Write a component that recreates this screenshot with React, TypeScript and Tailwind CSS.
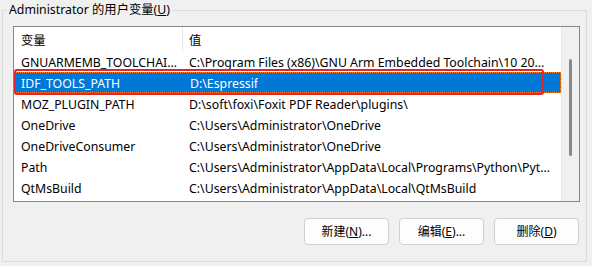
import React from "react";

const rows = [
  { name: "GNUARMEMB_TOOLCHAI...", value: "C:\\Program Files (x86)\\GNU Arm Embedded Toolchain\\10 20..." },
  { name: "IDF_TOOLS_PATH", value: "D:\\Espressif", selected: true },
  { name: "MOZ_PLUGIN_PATH", value: "D:\\soft\\foxi\\Foxit PDF Reader\\plugins\\" },
  { name: "OneDrive", value: "C:\\Users\\Administrator\\OneDrive" },
  { name: "OneDriveConsumer", value: "C:\\Users\\Administrator\\OneDrive" },
  { name: "Path", value: "C:\\Users\\Administrator\\AppData\\Local\\Programs\\Python\\Pyt..." },
  { name: "QtMsBuild", value: "C:\\Users\\Administrator\\AppData\\Local\\QtMsBuild" },
];

function Btn({ label, hot, tail }: { label: string; hot: string; tail: string }) {
  return (
    <button className="w-[85px] h-[27px] rounded-[4px] border border-[#d0d0d0] bg-[#fdfdfd] text-[12px] text-black flex items-center justify-center pt-[1px]">
      {label}(<span className="underline">{hot}</span>){tail}
    </button>
  );
}

export default function App() {
  return (
    <div
      className="w-[592px] h-[266px] bg-[#f0f0f0] overflow-hidden text-black"
      style={{ fontFamily: '"Segoe UI", "Noto Sans", "Noto Sans CJK SC", sans-serif' }}
    >
      <fieldset className="ml-[2px] w-[585px] h-[262px] border border-[#dcdcdc] pl-[10px] pr-[6px]">
        <legend className="-ml-[6px] px-[2px] text-[12.3px] leading-[20px]">
          Administrator 的用户变量(<span className="underline">U</span>)
        </legend>

        {/* list view */}
        <div className="relative mt-[6px] w-[567px] h-[176px] border border-[#828790] bg-white flex">
          <div className="flex-1 flex flex-col text-[12.3px]">
            <div className="h-[24px] flex items-center">
              <div className="w-[169px] pl-[7px] pt-[4px] border-r border-[#e5e5e5] h-full flex items-center">变量</div>
              <div className="pl-[6px] pt-[4px]">值</div>
            </div>
            {rows.map((r) => (
              <div
                key={r.name}
                className={
                  "h-[21px] flex items-center whitespace-nowrap pt-[3px] " +
                  (r.selected ? "bg-[#0078d7] text-white border border-dotted border-[#ff8728]" : "")
                }
              >
                <div className={r.selected ? "w-[169px] pl-[6px]" : "w-[169px] pl-[7px]"}>{r.name}</div>
                <div className="pl-[6px] overflow-hidden">{r.value}</div>
              </div>
            ))}
          </div>

          {/* scrollbar */}
          <div className="w-[18px] h-full bg-[#f0f0f0] border-l border-[#e8e8e8] flex justify-center">
            <div className="mt-[32px] w-[3px] h-[97px] rounded-full bg-[#8a8a8a]" />
          </div>

          {/* red highlight */}
          <div className="absolute left-[0px] top-[42px] w-[530px] h-[26px] border-2 border-[#e8232b] rounded-[3px]" />
        </div>

        <div className="mt-[16px] flex justify-end gap-[10px] pr-[1px]">
          <Btn label="新建" hot="N" tail="..." />
          <Btn label="编辑" hot="E" tail="..." />
          <Btn label="删除" hot="D" tail="" />
        </div>
      </fieldset>
    </div>
  );
}
